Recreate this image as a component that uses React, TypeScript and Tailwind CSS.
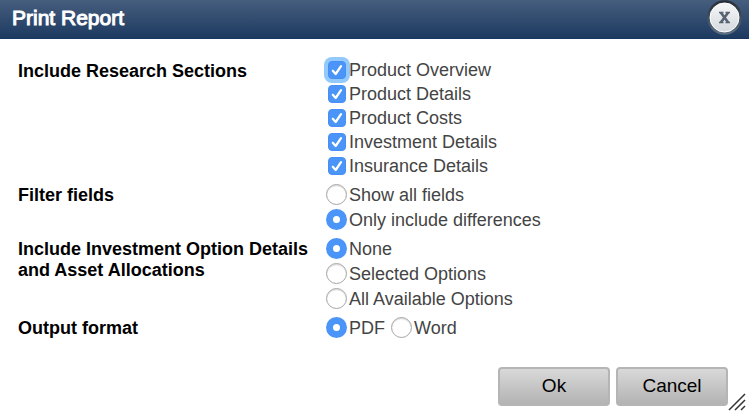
import React, { useState } from 'react';

const SECTIONS = ['Product Overview', 'Product Details', 'Product Costs', 'Investment Details', 'Insurance Details'];

interface CheckOptionProps {
    label: string;
    focused?: boolean;
}

function CheckOption({ label, focused }: CheckOptionProps) {
    const [checked, setChecked] = useState(true);

    return (
        <label className="flex h-6 items-center gap-[3px] px-0.5">
            <span className="grid shrink-0">
                <input
                    type="checkbox"
                    checked={checked}
                    onChange={(e) => setChecked(e.target.checked)}
                    className={`col-start-1 row-start-1 h-[18px] w-[18px] appearance-none rounded border border-gray-400 bg-white outline-none checked:border-[#4690f5] checked:bg-[#4b94f8] ${focused ? 'ring-4 ring-[#93c9fb]' : ''}`}
                />
                {checked && (
                    <svg className="pointer-events-none col-start-1 row-start-1 h-[18px] w-[18px]" viewBox="0 0 18 18" fill="none" aria-hidden="true">
                        <path d="M4.8 9.8L7.7 13L13 5.2" stroke="white" strokeWidth="2.3" strokeLinecap="round" strokeLinejoin="round" />
                    </svg>
                )}
            </span>
            {label}
        </label>
    );
}

interface RadioOptionProps {
    name: string;
    label: string;
    value: string;
    onSelect: (label: string) => void;
}

function RadioOption({ name, label, value, onSelect }: RadioOptionProps) {
    return (
        <label className="flex h-[25px] items-center gap-0.5">
            <input
                type="radio"
                name={name}
                checked={value === label}
                onChange={() => onSelect(label)}
                className="h-[21px] w-[21px] shrink-0 appearance-none rounded-full border border-[#a6a6a6] bg-white shadow-[inset_0_1px_1px_#d4d4d4] checked:border-[7px] checked:border-[#4b94f8] checked:shadow-none"
            />
            {label}
        </label>
    );
}

interface RowProps {
    title: string;
    children: React.ReactNode;
}

function Row({ title, children }: RowProps) {
    return (
        <fieldset className="grid grid-cols-[308px_1fr]" aria-label={title}>
            <div className="pt-[3px] font-bold leading-[21px] text-black">{title}</div>
            <div>{children}</div>
        </fieldset>
    );
}

export default function App() {
    const [fields, setFields] = useState('Only include differences');
    const [options, setOptions] = useState('None');
    const [format, setFormat] = useState('PDF');

    return (
        <div className="bg-white font-['Liberation_Sans',Arial,sans-serif] text-lg text-[#444]">
            {/* Title bar */}
            <header className="flex h-[39px] items-center justify-between border-b border-[#17375f] bg-gradient-to-b from-[#465e7e] to-[#1d3a61] pl-3 pr-[7px]">
                <h1 className="pb-0.5 text-[21px] leading-7 font-normal text-white [-webkit-text-stroke:1px_white]">Print Report</h1>
                <button type="button" aria-label="Close" className="self-start">
                    <svg className="h-[35px] w-[35px]" viewBox="0 0 35 35" aria-hidden="true">
                        <defs>
                            <linearGradient id="ring" x1="0" y1="0" x2="0" y2="1">
                                <stop offset="0" stopColor="#252c35" />
                                <stop offset="1" stopColor="#5e7182" />
                            </linearGradient>
                            <linearGradient id="face" x1="0" y1="0" x2="0" y2="1">
                                <stop offset="0" stopColor="#f5f6f7" />
                                <stop offset="1" stopColor="#d5dade" />
                            </linearGradient>
                        </defs>
                        <circle cx="17.5" cy="17.5" r="17.3" fill="url(#ring)" />
                        <circle cx="17.5" cy="17.5" r="14.5" fill="url(#face)" stroke="#fff" />
                        <path d="M13.8 12.5L21.2 22.5M21.2 12.5L13.8 22.5" stroke="#566473" strokeWidth="2.6" />
                        <path d="M12 12.5H16.5M18.5 12.5H23M12 22.5H16.5M18.5 22.5H23" stroke="#566473" strokeWidth="1.6" />
                    </svg>
                </button>
            </header>

            <form onSubmit={(e) => e.preventDefault()}>
                <div className="flex flex-col gap-1 px-[18px] pt-[19px]">
                    <Row title="Include Research Sections">
                        {SECTIONS.map((section, i) => (
                            <CheckOption key={section} label={section} focused={i === 0} />
                        ))}
                    </Row>
                    <Row title="Filter fields">
                        <RadioOption name="fields" label="Show all fields" value={fields} onSelect={setFields} />
                        <RadioOption name="fields" label="Only include differences" value={fields} onSelect={setFields} />
                    </Row>
                    <Row title="Include Investment Option Details and Asset Allocations">
                        <RadioOption name="options" label="None" value={options} onSelect={setOptions} />
                        <RadioOption name="options" label="Selected Options" value={options} onSelect={setOptions} />
                        <RadioOption name="options" label="All Available Options" value={options} onSelect={setOptions} />
                    </Row>
                    <Row title="Output format">
                        <div className="flex gap-1.5">
                            <RadioOption name="format" label="PDF" value={format} onSelect={setFormat} />
                            <RadioOption name="format" label="Word" value={format} onSelect={setFormat} />
                        </div>
                    </Row>
                </div>

                {/* Actions and resize grip */}
                <div className="flex items-end justify-end pr-px pt-[27px] text-[19px] text-black">
                    <div className="flex gap-1.5 pb-2">
                        <button type="submit" className="h-[39px] w-28 rounded border-2 border-[#b5b5b5] bg-gradient-to-b from-[#d9d9d9] to-[#b3b3b3] pb-0.5">
                            Ok
                        </button>
                        <button type="button" className="h-[39px] w-28 rounded border-2 border-[#b5b5b5] bg-gradient-to-b from-[#d9d9d9] to-[#b3b3b3] pb-0.5">
                            Cancel
                        </button>
                    </div>
                    <svg className="h-[21px] w-5" viewBox="0 0 20 21" fill="none" stroke="#333" strokeWidth="1.5" aria-hidden="true">
                        <path d="M1 17L17 1M7 17L17 7M13 17L17 13" />
                    </svg>
                </div>
            </form>
        </div>
    );
}
